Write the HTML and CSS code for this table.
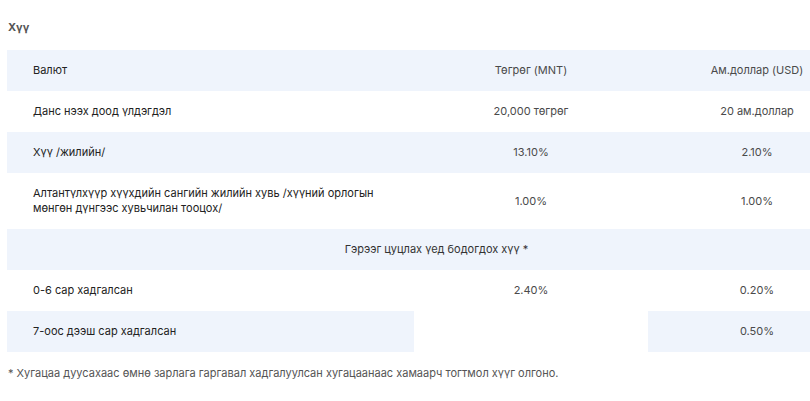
FILE: index.html
```html
<!DOCTYPE html>
<html lang="mn">
<head>
<meta charset="utf-8">
<title>Хүү</title>
<link rel="stylesheet" href="styles.css">
</head>
<body>
<div class="page">
  <h3 class="title">Хүү</h3>
  <div class="scroller">
    <table class="rates">
      <colgroup>
        <col class="c1"><col class="c2"><col class="c3">
      </colgroup>
      <tr class="shade">
        <td class="name">Валют</td>
        <td class="val">Төгрөг (MNT)</td>
        <td class="val">Ам.доллар (USD)</td>
      </tr>
      <tr>
        <td class="name">Данс нээх доод үлдэгдэл</td>
        <td class="val">20,000 төгрөг</td>
        <td class="val">20 ам.доллар</td>
      </tr>
      <tr class="shade">
        <td class="name">Хүү /жилийн/</td>
        <td class="val">13.10%</td>
        <td class="val">2.10%</td>
      </tr>
      <tr>
        <td class="name">Алтантүлхүүр хүүхдийн сангийн жилийн хувь /хүүний орлогын<br>мөнгөн дүнгээс хувьчилан тооцох/</td>
        <td class="val">1.00%</td>
        <td class="val">1.00%</td>
      </tr>
      <tr class="shade">
        <td class="group" colspan="3">Гэрээг цуцлах үед бодогдох хүү *</td>
      </tr>
      <tr>
        <td class="name">0-6 сар хадгалсан</td>
        <td class="val">2.40%</td>
        <td class="val">0.20%</td>
      </tr>
      <tr class="shade">
        <td class="name">7-оос дээш сар хадгалсан</td>
        <td class="val blank"></td>
        <td class="val">0.50%</td>
      </tr>
    </table>
  </div>
  <p class="note">* Хугацаа дуусахаас өмнө зарлага гаргавал хадгалуулсан хугацаанаас хамаарч тогтмол хүүг олгоно.</p>
</div>
</body>
</html>
```
FILE: styles.css
```css
html, body {
  margin: 0;
  padding: 0;
  background: #ffffff;
}
body {
  font-family: Inter, "Noto Sans", sans-serif;
  font-size: 11px;
  color: #222;
}
.page {
  width: 810px;
  padding: 19px 0 0 7px;
  box-sizing: border-box;
  overflow: hidden;
}
.title {
  margin: 0 0 15px 1px;
  font-size: 11px;
  line-height: 16px;
  font-weight: 700;
  color: #555;
}
.scroller {
  width: 803px;
  overflow: hidden;
}
.rates {
  border-collapse: collapse;
  width: 859px;
  table-layout: fixed;
}
.c1 { width: 407px; }
.c2 { width: 234px; }
.c3 { width: 218px; }
.rates td {
  padding: 13px 0;
  line-height: 15px;
  vertical-align: middle;
}
.shade td {
  background: #eff4fc;
}
.shade td.blank {
  background: #ffffff;
}
.name {
  padding-left: 26px !important;
  color: #222;
}
.val {
  text-align: center;
  color: #4a4a4a;
}
.group {
  text-align: center;
  color: #333;
}
.note {
  margin: 14px 0 0 1px;
  line-height: 15px;
  color: #555;
}
```
